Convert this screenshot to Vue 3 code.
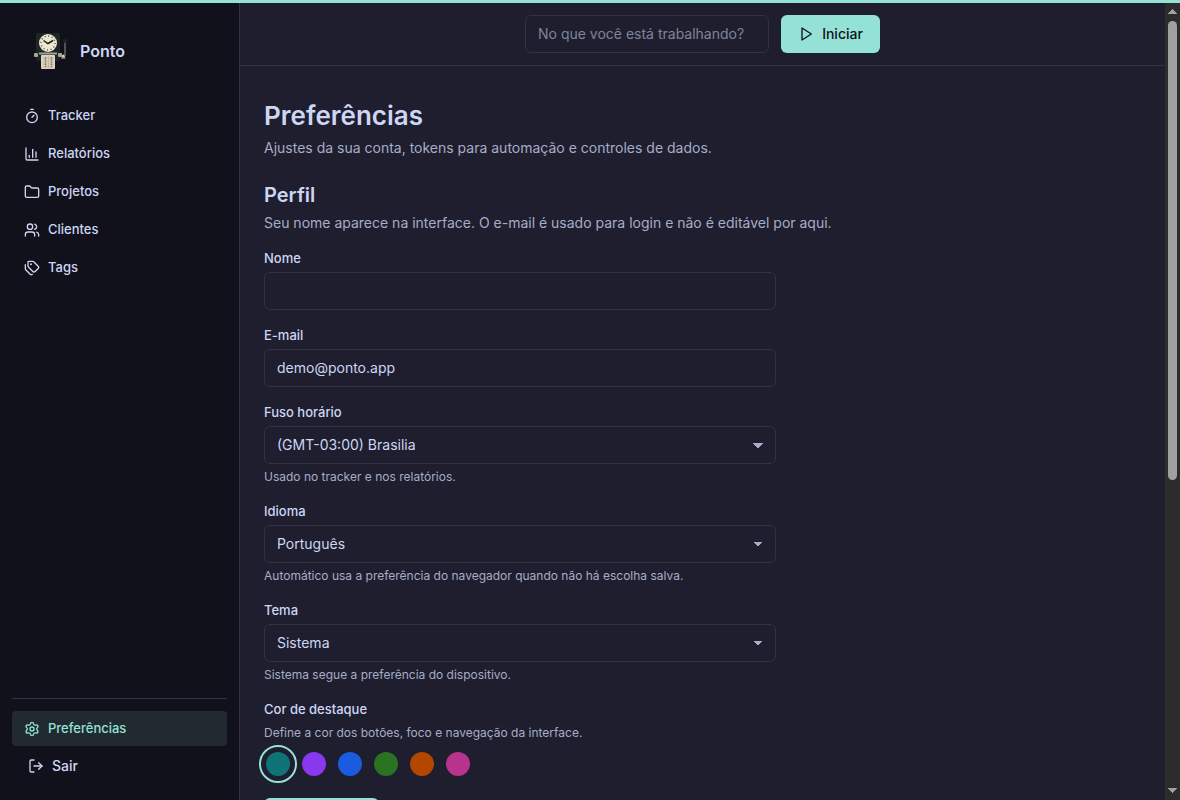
<script setup>
import { ref } from 'vue'

const task = ref('')
const name = ref('')
const email = ref('demo@ponto.app')
const timezone = ref('America/Sao_Paulo')
const language = ref('pt')
const theme = ref('system')
const accent = ref('teal')

const navItems = [
  {
    label: 'Tracker',
    paths: ['M10 2h4', 'M12 14l3-3', 'M4 14a8 8 0 1 0 16 0a8 8 0 1 0-16 0'],
  },
  {
    label: 'Relatórios',
    paths: ['M3 3v16a2 2 0 0 0 2 2h16', 'M18 17V9', 'M13 17V5', 'M8 17v-3'],
  },
  {
    label: 'Projetos',
    paths: [
      'M20 20a2 2 0 0 0 2-2V8a2 2 0 0 0-2-2h-7.9a2 2 0 0 1-1.69-.9L9.6 3.9A2 2 0 0 0 7.93 3H4a2 2 0 0 0-2 2v13a2 2 0 0 0 2 2Z',
    ],
  },
  {
    label: 'Clientes',
    paths: [
      'M16 21v-2a4 4 0 0 0-4-4H6a4 4 0 0 0-4 4v2',
      'M5 7a4 4 0 1 0 8 0a4 4 0 1 0-8 0',
      'M22 21v-2a4 4 0 0 0-3-3.87',
      'M16 3.13a4 4 0 0 1 0 7.75',
    ],
  },
  {
    label: 'Tags',
    paths: [
      'M13.172 2a2 2 0 0 1 1.414.586l6.71 6.71a2.4 2.4 0 0 1 0 3.408l-4.592 4.592a2.4 2.4 0 0 1-3.408 0l-6.71-6.71A2 2 0 0 1 6 9.172V3a1 1 0 0 1 1-1z',
      'M2 7v6.172a2 2 0 0 0 .586 1.414l6.71 6.71a2.4 2.4 0 0 0 3.191.193',
      'M10 6.5a.5.5 0 1 0 1 0a.5.5 0 1 0-1 0',
    ],
  },
]

const accents = [
  { id: 'teal', label: 'Verde-azulado', color: '#0f7477' },
  { id: 'violet', label: 'Violeta', color: '#8839ef' },
  { id: 'blue', label: 'Azul', color: '#1a5ce0' },
  { id: 'green', label: 'Verde', color: '#2b7222' },
  { id: 'orange', label: 'Laranja', color: '#b34700' },
  { id: 'pink', label: 'Rosa', color: '#b8348c' },
]
</script>

<template>
  <div class="app">
    <div class="accent-bar"></div>
    <div class="shell">
      <aside class="sidebar">
        <a class="brand" href="#">
          <svg class="logo" viewBox="0 0 40 40" aria-hidden="true">
            <rect x="6" y="2" width="24" height="28" rx="2" fill="#1c2626" />
            <circle cx="18" cy="12" r="9" fill="#eee5cf" />
            <circle cx="18" cy="12" r="7" fill="none" stroke="#4b4a42" stroke-width="1.4" stroke-dasharray="1 2.665" />
            <path d="M13.5 9.5L18 12.5L23 9.5" fill="none" stroke="#1a2020" stroke-width="1.5" />
            <rect x="4" y="22" width="4" height="4" rx="1" fill="#aaa596" />
            <rect x="9" y="21" width="18" height="3" fill="#62645f" />
            <rect x="9" y="22" width="18" height="1" fill="#a6a497" />
            <rect x="28" y="22" width="4" height="4" rx="1" fill="#aaa596" />
            <path d="M32 25v2h3.500" fill="none" stroke="#8c897d" stroke-width="1.5" />
            <circle cx="33.500" cy="25" r="1.6" fill="#ddd4bf" />
            <path d="M35 11v14" stroke="#706f67" stroke-width="1.4" />
            <circle cx="35" cy="10" r="2" fill="#1c2828" />
            <rect x="11" y="24" width="14" height="14" rx="1" fill="#ddd4bd" />
            <path d="M15.500 26v10M21.500 26v10" stroke="#6e6b5f" stroke-width="1.5" stroke-dasharray="1.4 .8" />
            <path d="M12.500 27h11M12.500 30h11M12.500 33h11M12.500 36h11M18.500 25v12" stroke="#aaa48f" stroke-width=".5" />
          </svg>
          <span>Ponto</span>
        </a>

        <nav class="nav">
          <a v-for="item in navItems" :key="item.label" class="nav-link" href="#">
            <svg class="icon" viewBox="0 0 24 24" aria-hidden="true">
              <path v-for="d in item.paths" :key="d" :d="d" />
            </svg>
            {{ item.label }}
          </a>
        </nav>

        <div class="sidebar-foot">
          <a class="nav-link active" href="#" aria-current="page">
            <svg class="icon" viewBox="0 0 24 24" aria-hidden="true">
              <path d="M9.671 4.136a2.34 2.34 0 0 1 4.659 0 2.34 2.34 0 0 0 3.319 1.915 2.34 2.34 0 0 1 2.33 4.033 2.34 2.34 0 0 0 0 3.831 2.34 2.34 0 0 1-2.33 4.033 2.34 2.34 0 0 0-3.319 1.915 2.34 2.34 0 0 1-4.659 0 2.34 2.34 0 0 0-3.32-1.915 2.34 2.34 0 0 1-2.33-4.033 2.34 2.34 0 0 0 0-3.831A2.34 2.34 0 0 1 6.35 6.051a2.34 2.34 0 0 0 3.319-1.915" />
              <circle cx="12" cy="12" r="3" />
            </svg>
            Preferências
          </a>
          <button class="logout" type="button">
            <svg class="icon" viewBox="0 0 24 24" aria-hidden="true">
              <path d="M9 21H5a2 2 0 0 1-2-2V5a2 2 0 0 1 2-2h4" />
              <path d="M16 17l5-5-5-5" />
              <path d="M21 12H9" />
            </svg>
            Sair
          </button>
        </div>
      </aside>

      <div class="page">
        <header class="topbar">
          <input v-model="task" class="control task" type="text" aria-label="Tarefa" placeholder="No que você está trabalhando?" />
          <button class="primary" type="button">
            <svg class="icon" viewBox="0 0 24 24" aria-hidden="true">
              <path d="M6 3l14 9-14 9z" />
            </svg>
            Iniciar
          </button>
        </header>

        <main class="content">
          <h1>Preferências</h1>
          <p class="lead">Ajustes da sua conta, tokens para automação e controles de dados.</p>

          <section>
            <h2>Perfil</h2>
            <p class="lead">Seu nome aparece na interface. O e-mail é usado para login e não é editável por aqui.</p>

            <form class="form" @submit.prevent>
              <div class="field">
                <label for="name">Nome</label>
                <input id="name" v-model="name" class="control" type="text" />
              </div>
              <div class="field">
                <label for="email">E-mail</label>
                <input id="email" v-model="email" class="control" type="email" readonly />
              </div>
              <div class="field">
                <label for="timezone">Fuso horário</label>
                <select id="timezone" v-model="timezone" class="control">
                  <option value="America/Sao_Paulo">(GMT-03:00) Brasilia</option>
                </select>
                <p class="hint">Usado no tracker e nos relatórios.</p>
              </div>
              <div class="field">
                <label for="language">Idioma</label>
                <select id="language" v-model="language" class="control">
                  <option value="pt">Português</option>
                </select>
                <p class="hint">Automático usa a preferência do navegador quando não há escolha salva.</p>
              </div>
              <div class="field">
                <label for="theme">Tema</label>
                <select id="theme" v-model="theme" class="control">
                  <option value="system">Sistema</option>
                </select>
                <p class="hint">Sistema segue a preferência do dispositivo.</p>
              </div>
              <fieldset class="field">
                <legend>Cor de destaque</legend>
                <p class="hint">Define a cor dos botões, foco e navegação da interface.</p>
                <div class="swatches">
                  <input
                    v-for="item in accents"
                    :key="item.id"
                    v-model="accent"
                    class="swatch"
                    type="radio"
                    name="accent"
                    :value="item.id"
                    :aria-label="item.label"
                    :style="{ backgroundColor: item.color }"
                  />
                </div>
              </fieldset>
              <button class="primary save" type="submit">Salvar perfil</button>
            </form>
          </section>
        </main>
      </div>

      <div class="scrollbar" aria-hidden="true">
        <svg class="arrow" viewBox="0 0 9 5"><path d="M0 5L4.500 0L9 5z" /></svg>
        <div class="track"><div class="thumb"></div></div>
        <svg class="arrow" viewBox="0 0 9 5"><path d="M0 0L4.500 5L9 0z" /></svg>
      </div>
    </div>
  </div>
</template>

<style>
html {
  color-scheme: dark;
}

body {
  margin: 0;
  background: #1e1e2e;
}
</style>

<style scoped>
.app {
  display: flex;
  flex-direction: column;
  height: 100vh;
  overflow: hidden;
  color: #cdd6f4;
  font-family: Inter, 'Liberation Sans', sans-serif;
  font-size: 14px;
  line-height: 21px;
}

.app * {
  box-sizing: border-box;
}

.accent-bar {
  flex: none;
  height: 3px;
  background: #94e2d5;
}

.shell {
  display: flex;
  flex: 1;
  min-height: 0;
}

.sidebar {
  display: flex;
  flex: none;
  flex-direction: column;
  width: 240px;
  padding: 16px 12px;
  border-right: 1px solid #313244;
  background: #11111b;
}

.brand {
  display: flex;
  align-items: center;
  gap: 10px;
  padding: 12px 18px;
  color: inherit;
  font-size: 16px;
  font-weight: 600;
  line-height: 24px;
  text-decoration: none;
}

.logo {
  width: 40px;
  height: 40px;
}

.nav {
  display: flex;
  flex-direction: column;
  gap: 3px;
  padding-top: 15px;
}

.nav-link {
  display: flex;
  align-items: center;
  gap: 8px;
  padding: 8px 12px;
  border-radius: 4px;
  color: inherit;
  font-size: 13px;
  font-weight: 500;
  line-height: 19px;
  text-decoration: none;
}

.nav-link.active {
  background: #212a31;
  color: #94e2d5;
}

.icon {
  flex: none;
  width: 16px;
  height: 16px;
  fill: none;
  stroke: currentColor;
  stroke-width: 2;
  stroke-linecap: round;
  stroke-linejoin: round;
}

.sidebar-foot {
  display: flex;
  flex-direction: column;
  margin-top: auto;
  padding-top: 12px;
  border-top: 1px solid #313244;
}

.logout {
  display: flex;
  align-items: center;
  gap: 8px;
  padding: 9px 16px 8px;
  border: 0;
  background: none;
  color: inherit;
  font: inherit;
  font-weight: 500;
  cursor: pointer;
}

.page {
  flex: 1;
  min-width: 0;
  overflow-y: auto;
  background: #1e1e2e;
  scrollbar-width: none;
}

.scrollbar {
  display: flex;
  flex: none;
  flex-direction: column;
  align-items: center;
  gap: 7px;
  width: 15px;
  padding: 6px 0 7px;
  background: #2c2c2c;
}

.arrow {
  flex: none;
  width: 9px;
  height: 5px;
  fill: #a0a0a0;
  shape-rendering: crispEdges;
}

.track {
  flex: 1;
  width: 9px;
}

.thumb {
  height: 60.4%;
  border-radius: 5px;
  background: #a0a0a0;
}

.topbar {
  position: sticky;
  z-index: 1;
  top: 0;
  display: flex;
  justify-content: center;
  gap: 12px;
  padding: 12px 24px;
  border-bottom: 1px solid #313244;
  background: #1e1e2e;
}

.control {
  width: 100%;
  height: 38px;
  margin: 0;
  padding: 0 12px 1px;
  border: 1px solid #313244;
  border-radius: 6px;
  outline: none;
  background-color: #1e1e2e;
  color: inherit;
  font: inherit;
}

.control::placeholder {
  color: #7f849c;
  opacity: 1;
}

select.control {
  appearance: none;
  background-image:
    linear-gradient(45deg, transparent 50%, #a6adc8 50%),
    linear-gradient(135deg, #a6adc8 50%, transparent 50%);
  background-position:
    right 17px center,
    right 12px center;
  background-repeat: no-repeat;
  background-size: 5px 5px;
}

.task {
  width: 244px;
}

.primary {
  display: flex;
  align-items: center;
  justify-content: center;
  gap: 8px;
  min-width: 99px;
  height: 38px;
  padding: 0 17px 1px;
  border: 0;
  border-radius: 6px;
  background: #94e2d5;
  color: #11111b;
  font: inherit;
  font-weight: 500;
  cursor: pointer;
}

.content {
  padding: 29px 24px 28px;
}

h1,
h2,
p {
  margin: 0;
}

h1 {
  font-size: 26px;
  font-weight: 600;
  line-height: 42px;
}

h2 {
  font-size: 20px;
  font-weight: 600;
  line-height: 30px;
}

section {
  padding-top: 22px;
}

.lead {
  color: #a6adc8;
}

h2 + .lead {
  padding-top: 2px;
}

.form {
  display: flex;
  flex-direction: column;
  gap: 16px;
  max-width: 512px;
  padding-top: 16px;
}

.field {
  display: flex;
  flex-direction: column;
  gap: 4px;
  min-width: 0;
  margin: 0;
  padding: 0;
  border: 0;
}

label,
legend {
  padding: 0;
  font-size: 13px;
  font-weight: 500;
  line-height: 19px;
}

.hint {
  color: #a6adc8;
  font-size: 12px;
  line-height: 18px;
}

fieldset .hint {
  padding-top: 5px;
}

.swatches {
  display: flex;
  gap: 8px;
  padding: 4px 0;
}

.swatch {
  width: 28px;
  height: 28px;
  margin: 0;
  border: 2px solid transparent;
  border-radius: 50%;
  background-clip: padding-box;
  appearance: none;
  cursor: pointer;
}

.swatch:checked {
  outline: 2px solid #94e2d5;
  outline-offset: 3px;
}

.save {
  align-self: flex-start;
}
</style>
